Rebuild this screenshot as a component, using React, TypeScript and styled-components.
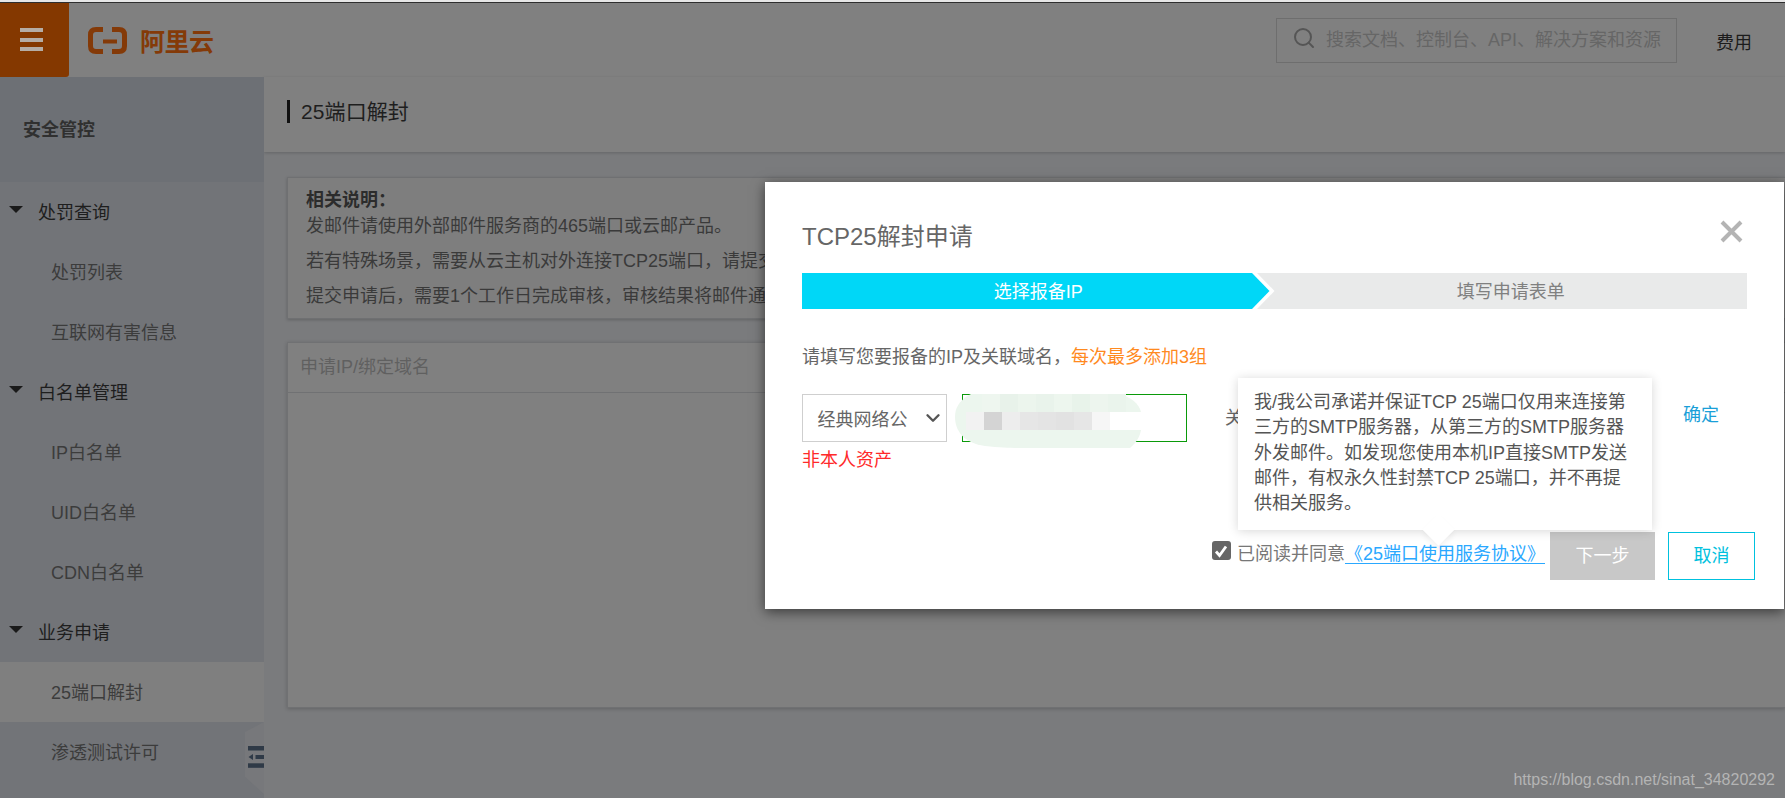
import React from "react";
import styled, { createGlobalStyle } from "styled-components";
import { Search, ChevronDown } from "lucide-react";

const Global = createGlobalStyle`
  html, body { margin: 0; padding: 0; background: #7a7b7d; }
  * { box-sizing: border-box; }
  body { font-family: "Liberation Sans", "Noto Sans CJK SC", sans-serif; font-size: 18px; }
`;

const Page = styled.div`
  position: relative;
  width: 1785px;
  height: 798px;
  overflow: hidden;
  display: flex;
  flex-direction: column;
  background: #7a7b7d;
`;
const TopLine = styled.div`
  height: 3px;
  flex: none;
  background: #e6e6e6;
  border-bottom: 1px solid #2e2e2e;
`;
const Header = styled.header`
  height: 74px;
  flex: none;
  display: flex;
  align-items: center;
  background: #808080;
  padding-right: 33px;
`;
const MenuButton = styled.div`
  width: 69px;
  height: 74px;
  background: #843800;
  border-bottom-right-radius: 3px;
  display: flex;
  flex-direction: column;
  gap: 5.5px;
  padding: 25px 0 0 20px;
`;
const MenuBar = styled.span`
  display: block;
  width: 23px;
  height: 4px;
  background: #b5ada5;
`;
const Logo = styled.div`
  display: flex;
  align-items: center;
  margin-left: 19px;
  gap: 13px;
  color: #843a08;
`;
const LogoText = styled.span`
  font-size: 25px;
  font-weight: 700;
  line-height: 28px;
  letter-spacing: -0.5px;
  margin-top: 3px;
`;
const SearchBox = styled.div`
  margin-left: auto;
  width: 401px;
  height: 45px;
  padding: 0 0 4px 15px;
  border: 1px solid #6e6e6e;
  display: flex;
  align-items: center;
  gap: 10px;
  color: #666;
  white-space: nowrap;
  svg { color: #555; flex: none; }
`;
const Fee = styled.span`
  margin-left: 39px;
  color: #1c1c1c;
  font-size: 18px;
  margin-top: 1px;
`;
const Body = styled.div`
  flex: 1;
  display: flex;
  min-height: 0;
`;
const Sidebar = styled.aside`
  position: relative;
  width: 264px;
  flex: none;
  background: #727478;
`;
const SideTitle = styled.div`
  height: 105px;
  background: #6d7075;
  display: flex;
  align-items: center;
  padding: 0 0 4px 23px;
  font-weight: 700;
  color: #303030;
`;
const GroupRow = styled.div`
  height: 60px;
  display: flex;
  align-items: center;
  padding: 0 0 2px 9px;
  gap: 15px;
  color: #1e1e1e;
`;
const Caret = styled.span`
  width: 0;
  height: 0;
  border-left: 7px solid transparent;
  border-right: 7px solid transparent;
  border-top: 7px solid #1a1a1a;
  margin-top: -4px;
`;
const SideItem = styled.div<{ $active?: boolean }>`
  height: 60px;
  display: flex;
  align-items: center;
  padding: 0 0 2px 51px;
  color: #3c3c3c;
  background: ${(p) => (p.$active ? "#7f7f7f" : "transparent")};
`;
const CollapseHandle = styled.div`
  position: absolute;
  right: 0;
  top: 645px;
  width: 19px;
  height: 72px;
  background: #77787b;
  clip-path: polygon(100% 0, 0 14%, 0 76%, 100% 100%);
  svg { position: absolute; left: 3px; top: 24px; }
`;
const Main = styled.main`
  flex: 1;
  min-width: 0;
  display: flex;
  flex-direction: column;
`;
const TitleBar = styled.div`
  height: 75px;
  flex: none;
  background: #808080;
  box-shadow: 0 1px 3px rgba(0, 0, 0, 0.18);
  display: flex;
  align-items: center;
  padding: 0 0 7px 23px;
  font-size: 21px;
  letter-spacing: 0.1px;
  color: #1e1e1e;
`;
const TitleMark = styled.span`
  width: 3px;
  height: 23px;
  background: #111;
  margin-right: 11px;
`;
const TitleText = styled.span`
  margin-top: -2px;
`;
const Content = styled.div`
  flex: 1;
  padding: 25px 0 0 23px;
  display: flex;
  flex-direction: column;
  gap: 23px;
`;
const InfoBox = styled.section`
  height: 142px;
  background: #7e7e7e;
  border: 1px solid #6f7072;
  border-right: 0;
  box-shadow: 0 1px 3px rgba(0, 0, 0, 0.2);
  padding: 9px 0 0 18px;
  color: #3a3a3a;
  white-space: nowrap;
`;
const InfoTitle = styled.div`
  font-weight: 700;
  line-height: 26px;
  color: #2c2c2c;
`;
const InfoLine = styled.p<{ $spaced?: boolean }>`
  margin: ${(p) => (p.$spaced ? "8px" : "0")} 0 0;
  line-height: 27px;
`;
const Table = styled.section`
  height: 366px;
  background: #808080;
  border: 1px solid #707173;
  border-right: 0;
  box-shadow: 0 1px 4px rgba(0, 0, 0, 0.2);
`;
const TableHead = styled.div`
  height: 50px;
  border-bottom: 1px solid #707173;
  display: flex;
  align-items: center;
  padding: 0 0 6px 12px;
  color: #606060;
`;
const Watermark = styled.div`
  position: absolute;
  right: 10px;
  top: 770px;
  font-size: 16px;
  line-height: 20px;
  color: #b4b4b4;
`;
const Modal = styled.div`
  position: absolute;
  left: 765px;
  top: 182px;
  width: 1019px;
  height: 427px;
  background: #fff;
  box-shadow: 0 3px 12px rgba(0, 0, 0, 0.55);
  padding: 37px 37px 29px;
  display: flex;
  flex-direction: column;
  color: #666;
`;
const ModalTitle = styled.h2`
  margin: 0;
  font-size: 24px;
  font-weight: 400;
  line-height: 36px;
  color: #666;
`;
const CloseMark = styled.svg`
  position: absolute;
  left: 955px;
  top: 38px;
`;
const Steps = styled.div`
  margin-top: 18px;
  height: 36px;
  flex: none;
  display: flex;
  background: #e9eaea;
`;
const ActiveStep = styled.div`
  width: 472.5px;
  background: #fff;
  clip-path: polygon(0 0, calc(100% - 17.5px) 0, 100% 50%, calc(100% - 17.5px) 100%, 0 100%);
`;
const ActiveFill = styled.div`
  height: 100%;
  padding-bottom: 2px;
  background: #00d7f7;
  color: #fff;
  display: flex;
  align-items: center;
  justify-content: center;
  clip-path: polygon(0 0, calc(100% - 22.5px) 0, calc(100% - 5px) 50%, calc(100% - 22.5px) 100%, 0 100%);
`;
const IdleStep = styled.div`
  flex: 1;
  display: flex;
  align-items: center;
  justify-content: center;
  padding-bottom: 2px;
  color: #808080;
`;
const Hint = styled.div`
  margin-top: 35px;
  line-height: 27px;
`;
const HintStrong = styled.span`
  color: #ff8a1f;
`;
const FormRow = styled.div`
  margin-top: 23px;
  display: flex;
  align-items: flex-start;
`;
const SelectCol = styled.div`
  width: 145px;
`;
const SelectBox = styled.div`
  height: 48px;
  border: 1.5px solid #cfcfcf;
  display: flex;
  align-items: center;
  padding: 0 2px 0 14.5px;
  justify-content: space-between;
  color: #666;
  white-space: nowrap;
  svg { color: #555; flex: none; }
`;
const ErrorText = styled.div`
  margin-top: 4px;
  line-height: 28px;
  color: #ff2a2a;
  white-space: nowrap;
`;
const InputBox = styled.div`
  position: relative;
  margin-left: 15px;
  width: 225px;
  height: 48px;
  border: 1.5px solid #0a9a0a;
  background: #fff;
`;
const Redaction = styled.svg`
  position: absolute;
  left: -8.5px;
  top: -1.5px;
  overflow: visible;
`;
const RelatedLabel = styled.span`
  margin-left: 38px;
  line-height: 48px;
  white-space: nowrap;
`;
const Confirm = styled.span`
  margin-left: auto;
  margin-right: 28px;
  line-height: 42px;
  color: #1a9fd8;
`;
const Tooltip = styled.div`
  position: absolute;
  left: 473px;
  top: 196px;
  width: 414px;
  height: 152px;
  background: #fff;
  padding: 12px 16px 0 16px;
  line-height: 25.3px;
  color: #555;
  box-shadow: 0 1px 10px rgba(0, 0, 0, 0.16);
  z-index: 2;
`;
const TooltipArrow = styled.span`
  position: absolute;
  left: 189px;
  bottom: -11px;
  width: 23px;
  height: 23px;
  background: #fff;
  transform: rotate(45deg);
  box-shadow: 3px 3px 5px rgba(0, 0, 0, 0.05);
`;
const Footer = styled.div`
  margin-top: auto;
  margin-right: -8px;
  display: flex;
  justify-content: flex-end;
  align-items: flex-start;
`;
const Agree = styled.div`
  display: flex;
  align-items: flex-start;
  margin-top: 9px;
  line-height: 27px;
  white-space: nowrap;
  color: #777;
`;
const CheckBox = styled.span`
  width: 19px;
  height: 19px;
  margin: 0 6px 0 0;
  border-radius: 3px;
  background: #666;
  display: flex;
  align-items: center;
  justify-content: center;
`;
const AgreeLink = styled.a`
  color: #2aa8ff;
  text-decoration: underline;
  text-underline-offset: 3px;
`;
const PrimaryButton = styled.div`
  width: 105px;
  height: 48px;
  margin-left: 5px;
  padding-bottom: 4px;
  background: #c8c8c8;
  color: #fff;
  display: flex;
  align-items: center;
  justify-content: center;
`;
const GhostButton = styled.div`
  width: 87px;
  height: 48px;
  margin-left: 13px;
  padding-bottom: 4px;
  border: 1.5px solid #00c1de;
  color: #00c1de;
  display: flex;
  align-items: center;
  justify-content: center;
`;

const sideData: { label: string; group?: boolean; active?: boolean }[] = [
  { label: "处罚查询", group: true },
  { label: "处罚列表" },
  { label: "互联网有害信息" },
  { label: "白名单管理", group: true },
  { label: "IP白名单" },
  { label: "UID白名单" },
  { label: "CDN白名单" },
  { label: "业务申请", group: true },
  { label: "25端口解封", active: true },
  { label: "渗透测试许可" },
];

const mosaic = ["#f2f2f2", "#d4d4d4", "#ededed", "#e6e6e6", "#e4e4e4", "#e2e2e2", "#e6e6e6", "#f6f6f6"];
const mosaicTop = ["#eef6ef", "#e8f2ea", "#ecf5ed", "#e9f3eb", "#edf6ee", "#e8f3ea", "#edf5ee", "#eaf4ec"];

function RedactionBlob() {
  return (
    <Redaction width="190" height="56" viewBox="0 0 190 56">
      <path
        d="M14 1 C4 7 0 14 0 23 C0 36 8 49 30 52 C50 54 60 54 75 54 L175 54 C182 48 185 42 186 36 L186 18 C184 10 176 2 162 0 L16 0 Z"
        fill="#ecf6ee"
      />
      {mosaicTop.map((c, i) => (
        <rect key={"t" + i} x={27 + i * 18} y="0" width="18" height="18" fill={c} />
      ))}
      <rect x="155" y="18" width="31" height="18" fill="#fff" />
      {mosaic.map((c, i) => (
        <rect key={i} x={11 + i * 18} y="18" width="18" height="18" fill={c} />
      ))}
    </Redaction>
  );
}

export default function App() {
  return (
    <Page>
      <Global />
      <TopLine />
      <Header>
        <MenuButton>
          <MenuBar />
          <MenuBar />
          <MenuBar />
        </MenuButton>
        <Logo>
          <svg width="39" height="27" viewBox="0 0 39 27" fill="none">
            <path
              d="M15 2.5 H8 C4.5 2.5 2.5 4.5 2.5 8 V19 C2.5 22.5 4.5 24.5 8 24.5 H15"
              stroke="#843a08"
              strokeWidth="5"
            />
            <path
              d="M24 2.5 H31 C34.5 2.5 36.5 4.5 36.5 8 V19 C36.5 22.5 34.5 24.5 31 24.5 H24"
              stroke="#843a08"
              strokeWidth="5"
            />
            <rect x="15" y="12.5" width="14" height="4" fill="#843a08" />
          </svg>
          <LogoText>阿里云</LogoText>
        </Logo>
        <SearchBox>
          <Search size={24} strokeWidth={2} />
          <span>搜索文档、控制台、API、解决方案和资源</span>
        </SearchBox>
        <Fee>费用</Fee>
      </Header>
      <Body>
        <Sidebar>
          <SideTitle>安全管控</SideTitle>
          {sideData.map((d) =>
            d.group ? (
              <GroupRow key={d.label}>
                <Caret />
                <span>{d.label}</span>
              </GroupRow>
            ) : (
              <SideItem key={d.label} $active={d.active}>
                {d.label}
              </SideItem>
            )
          )}
          <CollapseHandle>
            <svg width="16" height="22" viewBox="0 0 16 22">
              <rect x="0" y="0" width="16" height="4.5" fill="#2f3a47" />
              <path d="M0.5 11 L5 8 V14 Z" fill="#2f3a47" />
              <rect x="7.5" y="9" width="8.5" height="4" fill="#2f3a47" />
              <rect x="0" y="17.3" width="16" height="4.5" fill="#2f3a47" />
            </svg>
          </CollapseHandle>
        </Sidebar>
        <Main>
          <TitleBar>
            <TitleMark />
            <TitleText>25端口解封</TitleText>
          </TitleBar>
          <Content>
            <InfoBox>
              <InfoTitle>相关说明：</InfoTitle>
              <InfoLine>发邮件请使用外部邮件服务商的465端口或云邮产品。</InfoLine>
              <InfoLine $spaced>若有特殊场景，需要从云主机对外连接TCP25端口，请提交申请。</InfoLine>
              <InfoLine $spaced>提交申请后，需要1个工作日完成审核，审核结果将邮件通知您。</InfoLine>
            </InfoBox>
            <Table>
              <TableHead>申请IP/绑定域名</TableHead>
            </Table>
          </Content>
        </Main>
      </Body>
      <Watermark>https://blog.csdn.net/sinat_34820292</Watermark>
      <Modal>
        <ModalTitle>TCP25解封申请</ModalTitle>
        <CloseMark width="23" height="23" viewBox="0 0 23 23">
          <path d="M2 2 L21 21 M21 2 L2 21" stroke="#b4b4b4" strokeWidth="4" />
        </CloseMark>
        <Steps>
          <ActiveStep>
            <ActiveFill>选择报备IP</ActiveFill>
          </ActiveStep>
          <IdleStep>填写申请表单</IdleStep>
        </Steps>
        <Hint>
          请填写您要报备的IP及关联域名，<HintStrong>每次最多添加3组</HintStrong>
        </Hint>
        <FormRow>
          <SelectCol>
            <SelectBox>
              经典网络公
              <ChevronDown size={22} strokeWidth={2.6} />
            </SelectBox>
            <ErrorText>非本人资产</ErrorText>
          </SelectCol>
          <InputBox>
            <RedactionBlob />
          </InputBox>
          <RelatedLabel>关联域名</RelatedLabel>
          <Confirm>确定</Confirm>
        </FormRow>
        <Tooltip>
          我/我公司承诺并保证TCP 25端口仅用来连接第三方的SMTP服务器，从第三方的SMTP服务器外发邮件。如发现您使用本机IP直接SMTP发送邮件，有权永久性封禁TCP 25端口，并不再提供相关服务。
          <TooltipArrow />
        </Tooltip>
        <Footer>
          <Agree>
            <CheckBox>
              <svg width="14" height="14" viewBox="0 0 14 14" fill="none">
                <path d="M2 7.5 L5.5 11.5 L12 2.5" stroke="#fff" strokeWidth="2.8" />
              </svg>
            </CheckBox>
            已阅读并同意
            <AgreeLink>《25端口使用服务协议》</AgreeLink>
          </Agree>
          <PrimaryButton>下一步</PrimaryButton>
          <GhostButton>取消</GhostButton>
        </Footer>
      </Modal>
    </Page>
  );
}
